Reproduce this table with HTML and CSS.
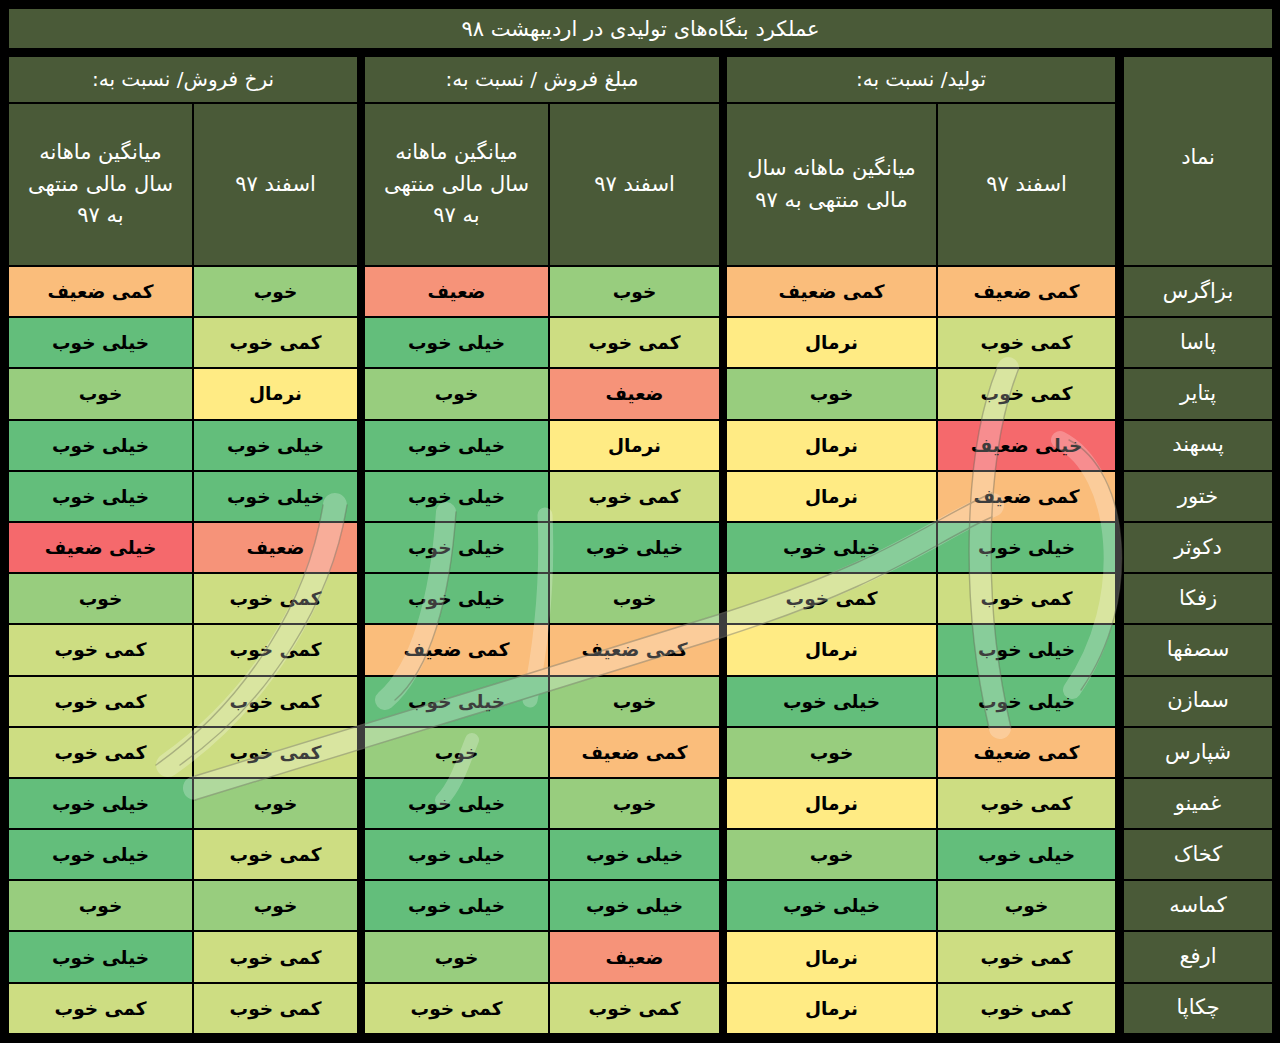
FILE: index.html
```html
<!DOCTYPE html>
<html lang="fa" dir="rtl">
<head>
<meta charset="utf-8">
<title>عملکرد بنگاه‌های تولیدی در اردیبهشت ۹۸</title>
<link rel="stylesheet" href="styles.css">
</head>
<body>
<div class="page">
  <div class="title">عملکرد بنگاه‌های تولیدی در اردیبهشت ۹۸</div>
  <div class="sheet">
    <div class="h sym-head">نماد</div>
    <div class="h group g1">تولید/ نسبت به:</div>
    <div class="h group g2">مبلغ فروش / نسبت به:</div>
    <div class="h group g3">نرخ فروش/ نسبت به:</div>

    <div class="h sub c1">اسفند ۹۷</div>
    <div class="h sub c2">میانگین ماهانه سال<br>مالی منتهی به ۹۷</div>
    <div class="h sub c3">اسفند ۹۷</div>
    <div class="h sub c4">میانگین ماهانه<br>سال مالی منتهی<br>به ۹۷</div>
    <div class="h sub c5">اسفند ۹۷</div>
    <div class="h sub c6">میانگین ماهانه<br>سال مالی منتهی<br>به ۹۷</div>

    <div class="h sym">بزاگرس</div><div class="d c1 kz">کمی ضعیف</div><div class="d c2 kz">کمی ضعیف</div><div class="d c3 kh">خوب</div><div class="d c4 z">ضعیف</div><div class="d c5 kh">خوب</div><div class="d c6 kz">کمی ضعیف</div>
    <div class="h sym">پاسا</div><div class="d c1 kk">کمی خوب</div><div class="d c2 n">نرمال</div><div class="d c3 kk">کمی خوب</div><div class="d c4 xk">خیلی خوب</div><div class="d c5 kk">کمی خوب</div><div class="d c6 xk">خیلی خوب</div>
    <div class="h sym">پتایر</div><div class="d c1 kk">کمی خوب</div><div class="d c2 kh">خوب</div><div class="d c3 z">ضعیف</div><div class="d c4 kh">خوب</div><div class="d c5 n">نرمال</div><div class="d c6 kh">خوب</div>
    <div class="h sym">پسهند</div><div class="d c1 xz">خیلی ضعیف</div><div class="d c2 n">نرمال</div><div class="d c3 n">نرمال</div><div class="d c4 xk">خیلی خوب</div><div class="d c5 xk">خیلی خوب</div><div class="d c6 xk">خیلی خوب</div>
    <div class="h sym">ختور</div><div class="d c1 kz">کمی ضعیف</div><div class="d c2 n">نرمال</div><div class="d c3 kk">کمی خوب</div><div class="d c4 xk">خیلی خوب</div><div class="d c5 xk">خیلی خوب</div><div class="d c6 xk">خیلی خوب</div>
    <div class="h sym">دکوثر</div><div class="d c1 xk">خیلی خوب</div><div class="d c2 xk">خیلی خوب</div><div class="d c3 xk">خیلی خوب</div><div class="d c4 xk">خیلی خوب</div><div class="d c5 z">ضعیف</div><div class="d c6 xz">خیلی ضعیف</div>
    <div class="h sym">زفکا</div><div class="d c1 kk">کمی خوب</div><div class="d c2 kk">کمی خوب</div><div class="d c3 kh">خوب</div><div class="d c4 xk">خیلی خوب</div><div class="d c5 kk">کمی خوب</div><div class="d c6 kh">خوب</div>
    <div class="h sym">سصفها</div><div class="d c1 xk">خیلی خوب</div><div class="d c2 n">نرمال</div><div class="d c3 kz">کمی ضعیف</div><div class="d c4 kz">کمی ضعیف</div><div class="d c5 kk">کمی خوب</div><div class="d c6 kk">کمی خوب</div>
    <div class="h sym">سمازن</div><div class="d c1 xk">خیلی خوب</div><div class="d c2 xk">خیلی خوب</div><div class="d c3 kh">خوب</div><div class="d c4 xk">خیلی خوب</div><div class="d c5 kk">کمی خوب</div><div class="d c6 kk">کمی خوب</div>
    <div class="h sym">شپارس</div><div class="d c1 kz">کمی ضعیف</div><div class="d c2 kh">خوب</div><div class="d c3 kz">کمی ضعیف</div><div class="d c4 kh">خوب</div><div class="d c5 kk">کمی خوب</div><div class="d c6 kk">کمی خوب</div>
    <div class="h sym">غمینو</div><div class="d c1 kk">کمی خوب</div><div class="d c2 n">نرمال</div><div class="d c3 kh">خوب</div><div class="d c4 xk">خیلی خوب</div><div class="d c5 kh">خوب</div><div class="d c6 xk">خیلی خوب</div>
    <div class="h sym">کخاک</div><div class="d c1 xk">خیلی خوب</div><div class="d c2 kh">خوب</div><div class="d c3 xk">خیلی خوب</div><div class="d c4 xk">خیلی خوب</div><div class="d c5 kk">کمی خوب</div><div class="d c6 xk">خیلی خوب</div>
    <div class="h sym">کماسه</div><div class="d c1 kh">خوب</div><div class="d c2 xk">خیلی خوب</div><div class="d c3 xk">خیلی خوب</div><div class="d c4 xk">خیلی خوب</div><div class="d c5 kh">خوب</div><div class="d c6 kh">خوب</div>
    <div class="h sym">ارفع</div><div class="d c1 kk">کمی خوب</div><div class="d c2 n">نرمال</div><div class="d c3 z">ضعیف</div><div class="d c4 kh">خوب</div><div class="d c5 kk">کمی خوب</div><div class="d c6 xk">خیلی خوب</div>
    <div class="h sym">چکاپا</div><div class="d c1 kk">کمی خوب</div><div class="d c2 n">نرمال</div><div class="d c3 kk">کمی خوب</div><div class="d c4 kk">کمی خوب</div><div class="d c5 kk">کمی خوب</div><div class="d c6 kk">کمی خوب</div>
  </div>
  <svg class="watermark" width="1280" height="1043" viewBox="0 0 1280 1043" aria-hidden="true">
    <g fill="none" stroke-linecap="round">
      <g stroke="#ffffff" opacity="0.24">
        <path d="M 195 788 C 350 740, 550 680, 720 626 S 930 532, 992 505" stroke-width="24"/>
        <path d="M 1008 368 C 975 450, 970 600, 1000 728" stroke-width="22"/>
        <path d="M 1060 440 C 1120 470, 1135 600, 1072 690" stroke-width="18"/>
        <path d="M 446 512 C 440 600, 420 670, 385 700" stroke-width="20"/>
        <path d="M 545 515 C 548 580, 542 640, 530 700" stroke-width="15"/>
        <path d="M 335 505 C 320 600, 260 700, 168 765" stroke-width="24"/>
        <path d="M 472 740 C 462 765, 456 785, 442 800" stroke-width="14"/>
      </g>
      <g stroke="#5c5c4c" stroke-width="1.4" opacity="0.38">
        <path d="M 195 776 C 350 728, 550 668, 720 614 S 930 520, 992 493"/>
        <path d="M 195 800 C 350 752, 550 692, 720 638 S 930 544, 992 517"/>
        <path d="M 997 368 C 964 450, 959 600, 989 728"/>
        <path d="M 1019 368 C 986 450, 981 600, 1011 728"/>
        <path d="M 1069 440 C 1129 470, 1144 600, 1081 690"/>
        <path d="M 456 512 C 450 600, 430 670, 395 700"/>
        <path d="M 347 505 C 332 600, 272 700, 180 765"/>
        <path d="M 323 505 C 308 600, 248 700, 156 765"/>
      </g>
    </g>
  </svg>
</div>
</body>
</html>
```

FILE: styles.css
```css
* { box-sizing: border-box; }

html, body {
  margin: 0;
  padding: 0;
  background: #000;
}

body {
  font-family: "DejaVu Sans", "Noto Sans", sans-serif;
  width: 1280px;
  height: 1043px;
  overflow: hidden;
}

.page {
  position: relative;
  width: 1280px;
  height: 1043px;
  padding: 9px 8px 9px 9px;
  direction: rtl;
}

.title {
  height: 39px;
  background: #4a5a38;
  color: #fff;
  font-size: 21px;
  display: flex;
  align-items: center;
  justify-content: center;
  margin-bottom: 9px;
}

.sheet {
  display: grid;
  direction: rtl;
  grid-template-columns: 155px 177px 215px 169px 189px 163px 183px;
  grid-template-rows: 45px 161px;
  grid-auto-rows: 49.2px;
  gap: 2px;
  background: #000;
}

.h {
  background: #4a5a38;
  color: #fff;
  font-size: 21px;
  line-height: 1.5;
  display: flex;
  align-items: center;
  justify-content: center;
  text-align: center;
}

.sym-head {
  grid-column: 1;
  grid-row: 1 / span 2;
  padding-bottom: 6px;
  margin-left: 7px;
}

.sym {
  grid-column: 1;
  margin-left: 7px;
  font-size: 21px;
}

.group { grid-row: 1; padding-bottom: 2px; font-size: 20px; }
.g1 { grid-column: 2 / span 2; margin-left: 6px; }
.g2 { grid-column: 4 / span 2; margin-left: 6px; }
.g3 { grid-column: 6 / span 2; }

.sub { grid-row: 2; }
.sub.c1 { grid-column: 2; }
.sub.c2 { grid-column: 3; margin-left: 6px; }
.sub.c3 { grid-column: 4; }
.sub.c4 { grid-column: 5; margin-left: 6px; }
.sub.c5 { grid-column: 6; }
.sub.c6 { grid-column: 7; }

.d {
  color: #000;
  font-weight: bold;
  font-size: 18.5px;
  display: flex;
  align-items: center;
  justify-content: center;
}

.d.c2 { margin-left: 6px; }
.d.c4 { margin-left: 6px; }

.xz { background: #f5696c; }
.z  { background: #f69379; }
.kz { background: #fabd7b; }
.n  { background: #ffeb84; }
.kk { background: #cddd82; }
.kh { background: #98cd7e; }
.xk { background: #63be7b; }

.watermark {
  position: absolute;
  left: 0;
  top: 0;
  pointer-events: none;
}
```
